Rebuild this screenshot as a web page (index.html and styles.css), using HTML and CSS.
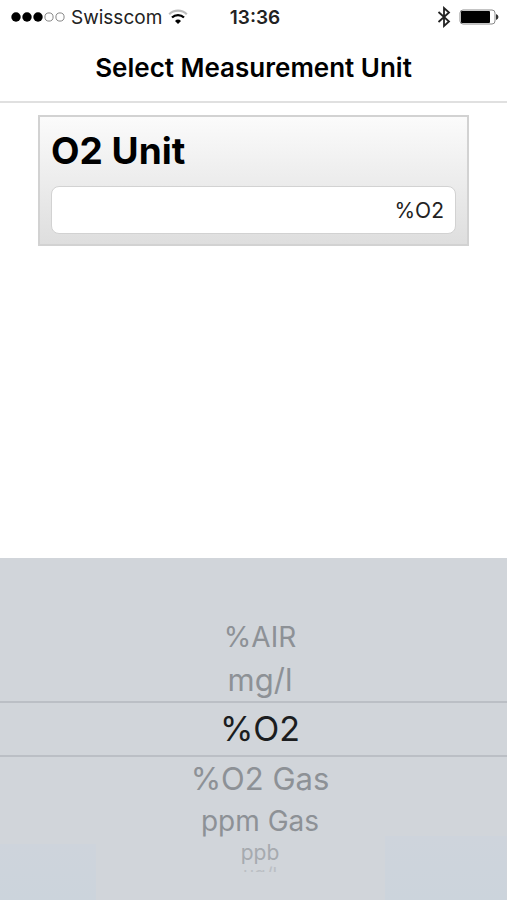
FILE: index.html
```html
<!DOCTYPE html>
<html lang="en">
<head>
    <meta charset="UTF-8">
    <meta name="viewport" content="width=device-width, initial-scale=1.0">
    <title>Select Measurement Unit</title>
    <link rel="stylesheet" href="styles.css">
</head>
<body>
    <div class="status-bar">
        <div class="status-left">
            <svg class="signal" width="54" height="12" viewBox="0 0 54 12" aria-hidden="true">
                <circle cx="5" cy="6" r="4.7"/>
                <circle cx="16" cy="6" r="4.7"/>
                <circle cx="27" cy="6" r="4.7"/>
                <circle class="empty" cx="38" cy="6" r="4.1"/>
                <circle class="empty" cx="49" cy="6" r="4.1"/>
            </svg>
            <span>Swisscom</span>
            <svg class="wifi" width="20" height="16" viewBox="0 0 20 16" aria-hidden="true">
                <path class="arc weak" d="M1.2 5.2A12.6 12.6 0 0 1 18.8 5.2"/>
                <path class="arc" d="M4 8.6A8.4 8.4 0 0 1 16 8.6"/>
                <path d="M7 12A4.4 4.4 0 0 1 13 12L10 15Z"/>
            </svg>
        </div>
        <span class="time">13:36</span>
        <div class="status-right">
            <svg width="14" height="22" viewBox="0 0 14 22" aria-hidden="true">
                <path class="bluetooth" d="M1.5 6L12 15.5L7 20V2L12 6.5L1.5 16"/>
            </svg>
            <svg width="40" height="16" viewBox="0 0 40 16" aria-hidden="true">
                <rect class="battery-case" x="1" y="1" width="35" height="14" rx="3"/>
                <rect x="2" y="2" width="29" height="12" rx="1"/>
                <path class="battery-tip" d="M37 5Q39.5 6 39.5 8T37 11Z"/>
            </svg>
        </div>
    </div>

    <header class="nav-bar">
        <h1>Select Measurement Unit</h1>
    </header>

    <main class="content">
        <div class="card">
            <label for="unit">O2 Unit</label>
            <input type="text" id="unit" value="%O2" readonly>
        </div>
    </main>

    <!-- Unit wheel -->
    <fieldset class="picker" aria-label="O2 Unit">
        <label class="option far"><input type="radio" name="unit" value="%AIR">%AIR</label>
        <label class="option near"><input type="radio" name="unit" value="mg/l">mg/l</label>
        <label class="option selected"><input type="radio" name="unit" value="%O2" checked>%O2</label>
        <label class="option near"><input type="radio" name="unit" value="%O2 Gas">%O2 Gas</label>
        <label class="option far"><input type="radio" name="unit" value="ppm Gas">ppm Gas</label>
        <label class="option edge"><input type="radio" name="unit" value="ppb">ppb</label>
        <label class="option last"><input type="radio" name="unit" value="µg/l">µg/l</label>
    </fieldset>

    <script>
        document.querySelectorAll('.picker input').forEach(radio => {
            radio.addEventListener('change', () => {
                document.getElementById('unit').value = radio.value;
            });
        });
    </script>
</body>
</html>
```
FILE: styles.css
```css
* {
    box-sizing: border-box;
}
body {
    margin: 0;
    min-height: 100vh;
    display: flex;
    flex-direction: column;
    background-color: #fff;
    color: #000;
    font-family: Inter, "Liberation Sans", sans-serif;
}
.status-bar {
    display: grid;
    grid-template-columns: 1fr auto 1fr;
    align-items: center;
    height: 34px;
    padding: 0 8px 0 11px;
    font-size: 19px;
    color: #222;
}
.status-left,
.status-right {
    display: flex;
    align-items: center;
    gap: 6px;
}
.status-right {
    justify-content: flex-end;
    gap: 8px;
}
.signal .empty {
    fill: none;
    stroke: #888;
    stroke-width: 1;
}
.wifi .arc {
    fill: none;
    stroke: #000;
    stroke-width: 2.2;
}
.wifi .weak {
    stroke: #bbb;
}
.time {
    font-weight: 600;
}
.bluetooth {
    fill: none;
    stroke: #222;
    stroke-width: 1.8;
}
.battery-case {
    fill: #fff;
    stroke: #888;
    stroke-width: 1;
}
.battery-tip {
    fill: #333;
}
.nav-bar {
    border-bottom: 2px solid #e0e0e0;
    text-align: center;
}
h1 {
    margin: 0;
    font-size: 26px;
    font-weight: 600;
    line-height: 67px;
}
.content {
    padding: 12px 38px;
}
.card {
    padding: 10px 11px;
    border: 2px solid #d2d2d2;
    background: linear-gradient(#fbfbfb, #dedede);
}
.card label {
    display: block;
    margin-bottom: 11px;
    font-size: 37px;
    font-weight: 700;
    line-height: 48px;
}
.card input {
    display: block;
    width: 100%;
    height: 48px;
    padding: 0 11px;
    border: 1px solid #d2d2d2;
    border-radius: 8px;
    background-color: #fff;
    color: #222;
    font-family: inherit;
    font-size: 21px;
    text-align: right;
}
.picker {
    margin: auto 0 0;
    padding: 58px 0 28px;
    border: 0;
    display: flex;
    flex-direction: column;
    /* faint blue tint in the bottom corners */
    background:
        linear-gradient(#ced4dc, #ccd4dc) left bottom / 19% 56px no-repeat,
        linear-gradient(#ced4dc, #ccd4dc) right bottom / 24% 64px no-repeat,
        #d1d5da;
}
.option {
    padding-left: 13px;
    text-align: center;
    color: #8d9196;
}
.option input {
    position: absolute;
    opacity: 0;
}
.near {
    font-size: 31px;
    line-height: 43px;
}
.far {
    font-size: 28px;
    line-height: 42px;
}
.selected {
    border-top: 2px solid #bbbfc5;
    border-bottom: 2px solid #bbbfc5;
    font-size: 34px;
    line-height: 52px;
    color: #1b1d20;
}
.edge {
    font-size: 21px;
    line-height: 22px;
    color: #a6aaaf;
}
.last {
    height: 8px;
    overflow: hidden;
    font-size: 19px;
    line-height: 22px;
    color: #bbbfc4;
}
```
